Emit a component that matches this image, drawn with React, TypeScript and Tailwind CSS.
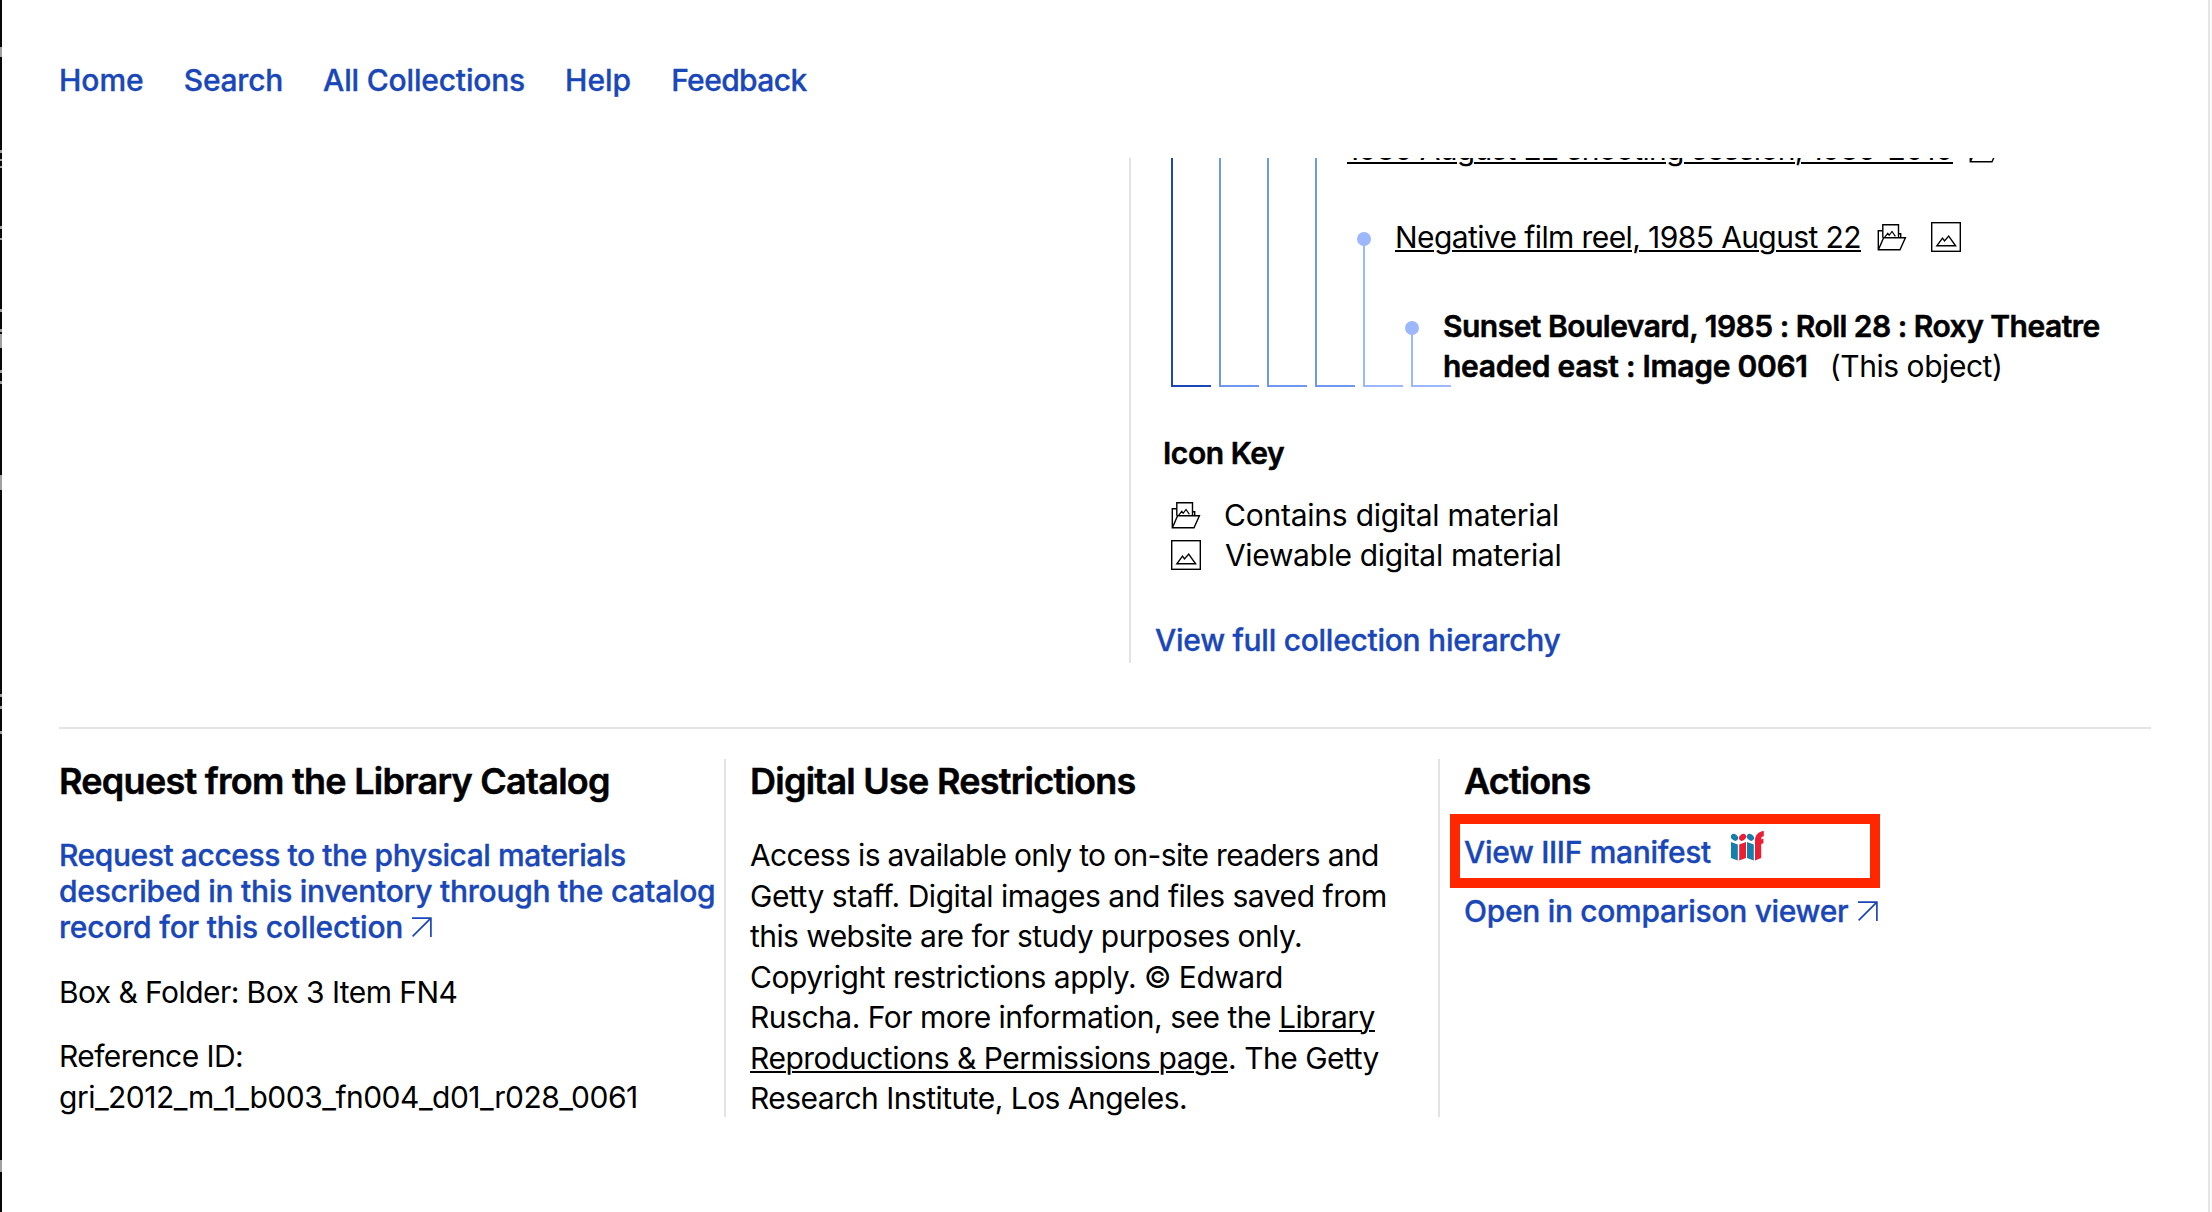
import React from 'react';

const LINK = 'text-[#1a47b8] font-medium [-webkit-text-stroke:0.35px_currentColor]';
const STRONG = 'font-semibold [-webkit-text-stroke:0.5px_currentColor]';
const UNDERLINE = 'underline decoration-2 underline-offset-2';

function FolderIcon({ className = '' }: { className?: string }) {
  return (
    <svg viewBox="0 0 30 30" fill="none" stroke="currentColor" strokeWidth="1.4" className={`size-[30px] shrink-0 ${className}`}>
      <path d="M5.5 8.7H1.3v19H23l5.4-11.9H6.6L1.5 27.5" />
      <path d="M5.8 15.8V2.7h15.7v13.1M21.8 11.8h1.9v4" />
      <path d="M7.4 15.6l3.4-4.3 1.4 2 2.8-3.8 3.4 4.8" strokeWidth="1.2" />
    </svg>
  );
}

function PictureIcon({ className = '' }: { className?: string }) {
  return (
    <svg viewBox="0 0 30 30" fill="none" stroke="currentColor" strokeWidth="1.4" className={`size-[30px] shrink-0 ${className}`}>
      <rect x="0.7" y="0.7" width="28.6" height="28.6" />
      <path d="M5.8 23.8l5.7-7.6 2 2.7 4.2-4.8 6.9 9.7z" />
    </svg>
  );
}

function ArrowIcon({ className = '' }: { className?: string }) {
  return (
    <svg viewBox="0 0 20 20" fill="none" stroke="currentColor" strokeWidth="1.7" className={`size-5 shrink-0 ${className}`}>
      <path d="M0 1.1h18.9V20M0.6 19.4L18.9 1.1" />
    </svg>
  );
}

function IiifLogo({ className = '' }: { className?: string }) {
  return (
    <svg viewBox="0 0 33 30" className={`h-[30px] w-[33px] shrink-0 ${className}`}>
      <g fill="#137faa">
        <ellipse cx="3.5" cy="6.3" rx="3.9" ry="3" transform="rotate(40 3.5 6.3)" />
        <path d="M0 11l6.8 2.4v16L0 27z" />
        <ellipse cx="19.4" cy="6.3" rx="3.9" ry="3" transform="rotate(40 19.4 6.3)" />
        <path d="M16 11l6.8 2.4v16L16 27z" />
      </g>
      <g fill="#ed1d33">
        <ellipse cx="11.6" cy="6.3" rx="3.9" ry="3" transform="rotate(-40 11.6 6.3)" />
        <path d="M15 11l-6.8 2.4v16L15 27z" />
        <path d="M32.8 0v5.2c-1.8 0-2.6 1.2-2.6 3.2l2.2-.8v4.6l-2.2.8v14L24 29.4V9.5C24 4 27.5 0.5 32.8 0z" />
      </g>
    </svg>
  );
}

/** Sliver of the dark window behind the page, with light text fragments showing. */
const SPECKS: [number, number][] = [
  [47, 10], [150, 3], [159, 2], [166, 2], [226, 3], [238, 2], [309, 3], [329, 3], [334, 14],
  [370, 3], [381, 3], [475, 15], [694, 3], [706, 3], [731, 3], [1160, 12],
];

function Sliver() {
  return (
    <svg viewBox="0 0 2 1212" className="h-full w-0.5 shrink-0 bg-[#070707]">
      {SPECKS.map(([y, h]) => (
        <rect key={y} x="0" y={y} width="2" height={h} fill="#a0a0a0" />
      ))}
    </svg>
  );
}

function Nav() {
  return (
    <nav className={`flex h-[158px] gap-10 pt-[60px] pl-[57px] leading-10 ${LINK}`}>
      <a>Home</a>
      <a className="tracking-[-0.235px]">Search</a>
      <a className="tracking-[-0.178px]">All Collections</a>
      <a>Help</a>
      <a className="tracking-[-0.6px]">Feedback</a>
    </nav>
  );
}

function Tree() {
  const dot = 'absolute -left-2 -top-[7px] size-3.5 rounded-full bg-[#9db7fd]';
  const bar = 'relative w-10 border-b-2 border-l-2';
  return (
    <div className="grid h-[229px]">
      <div className="flex items-end gap-2 pl-10 [grid-area:1/1]">
        <div className={`${bar} h-full border-[#1a47b8]`} />
        <div className={`${bar} h-full border-[#7096f0]`} />
        <div className={`${bar} h-full border-[#7096f0]`} />
        <div className={`${bar} h-full border-[#7096f0]`} />
        <div className={`${bar} h-[148px] border-[#9db7fd]`}><span className={dot} /></div>
        <div className={`${bar} h-[59px] border-[#9db7fd]`}><span className={dot} /></div>
      </div>
      <div className="-mt-[29px] leading-10 [grid-area:1/1]">
        <div className="flex items-center pl-[216px]">
          <a className={`tracking-[-0.683px] ${UNDERLINE}`}>1985 August 22 shooting session, 1985-2010</a>
          <FolderIcon className="ml-4" />
        </div>
        <div className="mt-12 flex items-center pl-[264px]">
          <a className={`tracking-[-0.6px] ${UNDERLINE}`}>Negative film reel, 1985 August 22</a>
          <FolderIcon className="ml-4" />
          <PictureIcon className="ml-6" />
        </div>
        <div className="mt-[49px] pl-[312px] whitespace-nowrap">
          <p className={`tracking-[-0.52px] ${STRONG}`}>Sunset Boulevard, 1985 : Roll 28 : Roxy Theatre</p>
          <p className="flex gap-[22px]">
            <span className={`tracking-[-0.28px] ${STRONG}`}>headed east : Image 0061</span>
            <span className="tracking-[-0.45px]">(This object)</span>
          </p>
        </div>
      </div>
    </div>
  );
}

function Hierarchy() {
  return (
    <section className="ml-[1127px] h-[505px] overflow-hidden border-l-2 border-[#e3e3e3] leading-10">
      <Tree />
      <h3 className={`mt-[46px] pl-8 tracking-[-0.45px] ${STRONG}`}>Icon Key</h3>
      <div className="mt-[22px] flex items-center gap-[23px] pl-10">
        <FolderIcon />
        <span className="tracking-[-0.23px]">Contains digital material</span>
      </div>
      <div className="flex items-center gap-6 pl-10">
        <PictureIcon />
        <span className="tracking-[-0.34px]">Viewable digital material</span>
      </div>
      <a className={`mt-[45px] block pl-6 tracking-[-0.27px] ${LINK}`}>View full collection hierarchy</a>
    </section>
  );
}

function RequestColumn() {
  return (
    <section className="w-[667px] shrink-0 border-r-2 border-[#e3e3e3]">
      <h2 className={`text-[36px] leading-[44px] tracking-[-0.736px] ${STRONG}`}>Request from the Library Catalog</h2>
      <a className={`mt-[34px] block leading-9 ${LINK}`}>
        <span className="block tracking-[-0.42px]">Request access to the physical materials</span>
        <span className="block tracking-[-0.26px]">described in this inventory through the catalog</span>
        <span className="flex items-center tracking-[-0.2px]">
          record for this collection
          <ArrowIcon className="ml-[9px]" />
        </span>
      </a>
      <p className="mt-[27px] leading-[40.5px] tracking-[-0.566px]">Box &amp; Folder: Box 3 Item FN4</p>
      <p className="mt-[23.5px] leading-[40.5px]">
        <span className="block tracking-[-0.571px]">Reference ID:</span>
        <span className="block tracking-[-0.51px]">gri_2012_m_1_b003_fn004_d01_r028_0061</span>
      </p>
    </section>
  );
}

function RestrictionsColumn() {
  return (
    <section className="w-[714px] shrink-0 border-r-2 border-[#e3e3e3] pl-6">
      <h2 className={`text-[36px] leading-[44px] tracking-[-0.758px] ${STRONG}`}>Digital Use Restrictions</h2>
      <p className="mt-8 leading-[40.5px]">
        <span className="block tracking-[-0.65px]">Access is available only to on-site readers and</span>
        <span className="block tracking-[-0.464px]">Getty staff. Digital images and files saved from</span>
        <span className="block tracking-[-0.57px]">this website are for study purposes only.</span>
        <span className="block tracking-[-0.492px]">Copyright restrictions apply. © Edward</span>
        <span className="block tracking-[-0.49px]">Ruscha. For more information, see the <a className={UNDERLINE}>Library</a></span>
        <span className="block tracking-[-0.49px]"><a className={UNDERLINE}>Reproductions &amp; Permissions page</a>. The Getty</span>
        <span className="block tracking-[-0.529px]">Research Institute, Los Angeles.</span>
      </p>
    </section>
  );
}

function ActionsColumn() {
  return (
    <section className="relative flex-1 pl-6">
      <h2 className={`text-[36px] leading-[44px] tracking-[-0.866px] ${STRONG}`}>Actions</h2>
      <a className={`mt-[31px] flex leading-9 ${LINK}`}>
        <span className="tracking-[-0.33px]">View IIIF manifest</span>
        <IiifLogo className="-mt-[3px] ml-5" />
      </a>
      <a className={`mt-[23px] flex items-center leading-9 ${LINK}`}>
        <span className="tracking-[-0.315px]">Open in comparison viewer</span>
        <ArrowIcon className="ml-2.5" />
      </a>
      <div className="absolute top-[55px] left-2.5 h-[74px] w-[430px] border-10 border-[#ff2600]" />
    </section>
  );
}

export default function App() {
  return (
    <div className="flex h-[1212px] w-[2212px] overflow-hidden bg-white font-['Inter',sans-serif] text-[30px] text-black">
      <Sliver />
      <main className="w-[2206px]">
        <Nav />
        <Hierarchy />
        <div className="mt-16 ml-[57px] w-[2092px] border-t-2 border-[#e3e3e3] pt-[30px]">
          <div className="flex h-[358px]">
            <RequestColumn />
            <RestrictionsColumn />
            <ActionsColumn />
          </div>
        </div>
      </main>
      <div className="w-1 border-l-2 border-[#e6e6e6] bg-[#fafafa]" />
    </div>
  );
}
